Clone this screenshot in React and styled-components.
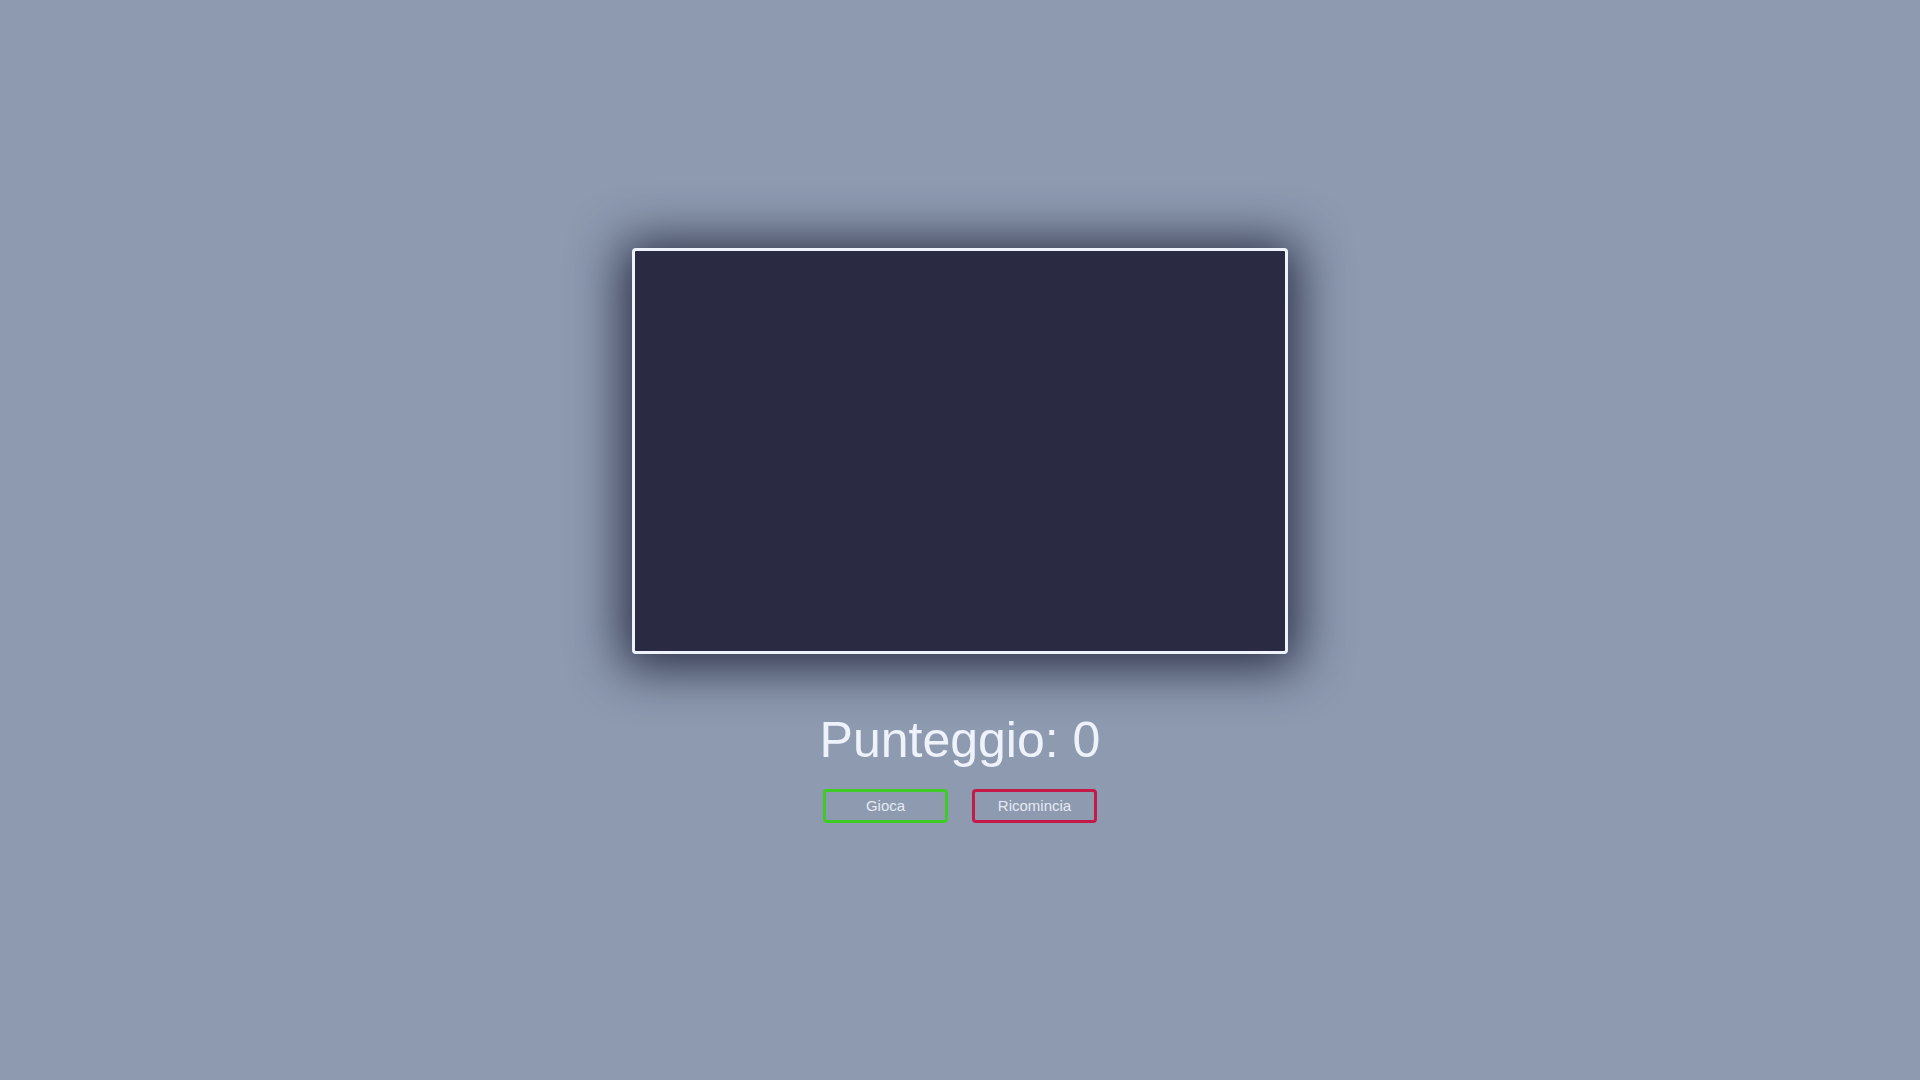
import React from "react";
import styled, { createGlobalStyle } from "styled-components";

const GlobalStyle = createGlobalStyle`
  html, body {
    margin: 0;
    padding: 0;
    background: #8d9ab0;
  }
  body {
    font-family: "Liberation Sans", Arial, sans-serif;
  }
`;

const Page = styled.main`
  min-height: 100vh;
  display: flex;
  flex-direction: column;
  align-items: center;
  justify-content: center;
  background: #8d9ab0;
`;

const Board = styled.div`
  width: 650px;
  height: 400px;
  background: #2a2b42;
  border: 3px solid #eef2fc;
  border-radius: 4px;
  box-shadow: 0 4px 50px 10px rgba(26, 28, 50, 0.85);
`;

const Score = styled.h1`
  margin: 57px 0 0;
  font-size: 50px;
  font-weight: 400;
  line-height: normal;
  color: #eef2fb;
`;

const Controls = styled.div`
  display: flex;
  gap: 24px;
  margin: 20px 0 10px;
`;

const Button = styled.button`
  width: 125px;
  height: 34px;
  background: transparent;
  border: 3px solid ${(p) => p.$color};
  border-radius: 4px;
  color: #e6ebf3;
  font-family: "Liberation Sans", Arial, sans-serif;
  font-size: 15px;
  padding: 0;
  cursor: pointer;
`;

export default function App() {
  return (
    <>
      <GlobalStyle />
      <Page>
        <Board />
        <Score>Punteggio: 0</Score>
        <Controls>
          <Button $color="#3fcb25">Gioca</Button>
          <Button $color="#c41a4a">Ricomincia</Button>
        </Controls>
      </Page>
    </>
  );
}
